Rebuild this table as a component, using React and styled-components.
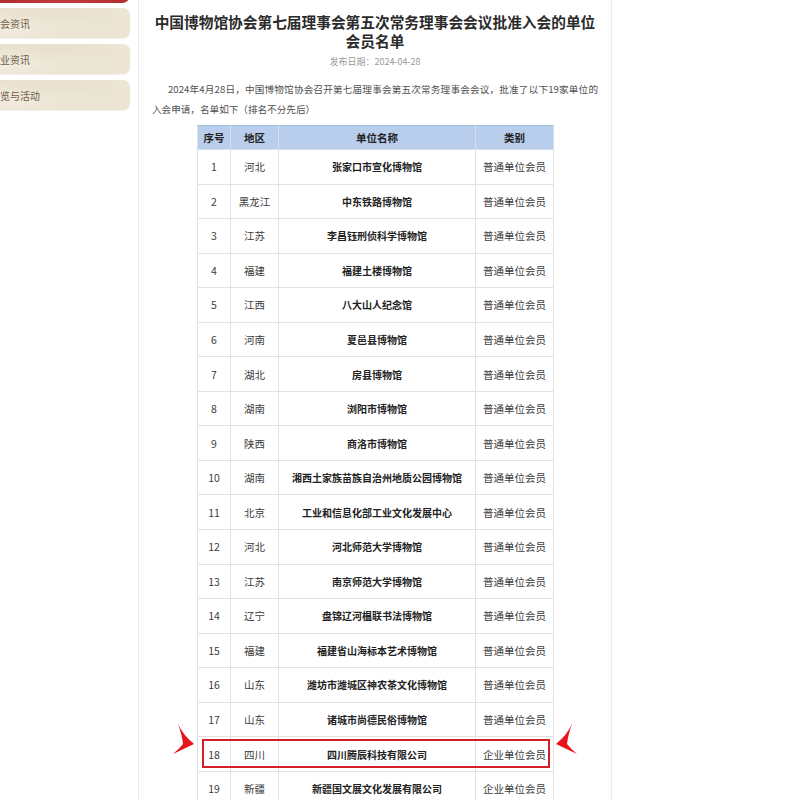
import React from "react";
import styled, { createGlobalStyle } from "styled-components";

const GlobalStyle = createGlobalStyle`
  html, body {
    margin: 0;
    padding: 0;
    background: #fff;
    font-family: "Noto Sans CJK SC", "Noto Sans", sans-serif;
    overflow: hidden;
  }
`;

const Page = styled.div`
  display: flex;
  align-items: stretch;
  width: 800px;
  height: 800px;
  overflow: hidden;
`;

const Sidebar = styled.div`
  width: 170px;
  margin-left: -40px;
  margin-right: 8px;
  display: flex;
  flex-direction: column;
  gap: 6px;
  flex-shrink: 0;
`;

const TopTab = styled.div`
  height: 18px;
  margin-top: -15px;
  background: linear-gradient(90deg, #a9262a, #c23a3a 60%, #b42c30);
  border-radius: 0 0 8px 0;
  margin-bottom: -1px;
`;

const NavItem = styled.div`
  height: 30px;
  display: flex;
  align-items: center;
  padding-left: 30px;
  font-size: 10px;
  color: #6e5b45;
  border-radius: 0 7px 7px 0;
  background:
    radial-gradient(ellipse at 30% 70%, rgba(255, 255, 255, 0.35), transparent 60%),
    linear-gradient(100deg, #ece5d4 0%, #e8e0cc 50%, #ede6d6 100%);
  box-shadow: 0 1px 1px rgba(150, 130, 100, 0.12);
`;

const Main = styled.div`
  flex-shrink: 0;
  border-left: 1px solid #ebebeb;
  border-right: 1px solid #ebebeb;
  padding: 12px 13px 0 13px;
  box-sizing: border-box;
  width: 474px;
`;

const Title = styled.h1`
  margin: 0 -4px;
  font-size: 14.7px;
  line-height: 19px;
  font-weight: bold;
  color: #2b2b2b;
  text-align: center;
`;

const DateLine = styled.div`
  margin-top: 6px;
  font-size: 9px;
  line-height: 12px;
  color: #9a9a9a;
  text-align: center;
`;

const Para = styled.p`
  margin: 11px 0 0 0;
  font-size: 9.6px;
  line-height: 20px;
  color: #505050;
  text-indent: 16px;
  text-align: justify;
`;

const TableWrap = styled.div`
  position: relative;
  width: 356px;
  margin: 6px auto 0;
`;

const Table = styled.table`
  width: 356px;
  border-collapse: collapse;
  table-layout: fixed;
  border: 1px solid #9cc0da;
`;

const Th = styled.th`
  height: 23px;
  background: #b9cdec;
  color: #222;
  font-size: 10.5px;
  font-weight: bold;
  border: 1px solid #d7dfe8;
  border-top: 1px solid #9cc0da;
  padding: 0;
`;

const Row = styled.tr`
  height: 34.55px;
`;

const Td = styled.td`
  border: 1px solid #dfe3e8;
  text-align: center;
  padding: 0;
  font-size: ${(p) => (p.$name ? "10px" : "10.5px")};
  font-weight: ${(p) => (p.$name ? "bold" : "normal")};
  color: ${(p) => (p.$name ? "#222" : "#3c3c3c")};
  white-space: nowrap;
`;

const Highlight = styled.div`
  position: absolute;
  left: 5px;
  right: 3px;
  height: 29px;
  border: 2px solid #d51f26;
  box-sizing: border-box;
  pointer-events: none;
`;

const Arrow = styled.svg`
  position: absolute;
  width: 26px;
  height: 34px;
`;

const rows = [
  ["河北", "张家口市宣化博物馆", "普通单位会员"],
  ["黑龙江", "中东铁路博物馆", "普通单位会员"],
  ["江苏", "李昌钰刑侦科学博物馆", "普通单位会员"],
  ["福建", "福建土楼博物馆", "普通单位会员"],
  ["江西", "八大山人纪念馆", "普通单位会员"],
  ["河南", "夏邑县博物馆", "普通单位会员"],
  ["湖北", "房县博物馆", "普通单位会员"],
  ["湖南", "浏阳市博物馆", "普通单位会员"],
  ["陕西", "商洛市博物馆", "普通单位会员"],
  ["湖南", "湘西土家族苗族自治州地质公园博物馆", "普通单位会员"],
  ["北京", "工业和信息化部工业文化发展中心", "普通单位会员"],
  ["河北", "河北师范大学博物馆", "普通单位会员"],
  ["江苏", "南京师范大学博物馆", "普通单位会员"],
  ["辽宁", "盘锦辽河榅联书法博物馆", "普通单位会员"],
  ["福建", "福建省山海标本艺术博物馆", "普通单位会员"],
  ["山东", "潍坊市潍城区神农茶文化博物馆", "普通单位会员"],
  ["山东", "诸城市尚德民俗博物馆", "普通单位会员"],
  ["四川", "四川腾辰科技有限公司", "企业单位会员"],
  ["新疆", "新疆国文展文化发展有限公司", "企业单位会员"],
];

const HEAD_H = 24;
const ROW_H = 34.55;
const marked = 17;

export default function App() {
  const boxTop = HEAD_H + marked * ROW_H + 3;
  return (
    <>
      <GlobalStyle />
      <Page>
        <Sidebar>
          <TopTab />
          <NavItem>协会资讯</NavItem>
          <NavItem>行业资讯</NavItem>
          <NavItem>展览与活动</NavItem>
        </Sidebar>
        <Main>
          <Title>
            中国博物馆协会第七届理事会第五次常务理事会会议批准入会的单位
            <br />
            会员名单
          </Title>
          <DateLine>发布日期：2024-04-28</DateLine>
          <Para>
            2024年4月28日，中国博物馆协会召开第七届理事会第五次常务理事会会议，批准了以下19家单位的入会申请，名单如下（排名不分先后）
          </Para>
          <TableWrap>
            <Table>
              <colgroup>
                <col style={{ width: 33 }} />
                <col style={{ width: 48 }} />
                <col style={{ width: 197 }} />
                <col style={{ width: 78 }} />
              </colgroup>
              <thead>
                <tr>
                  <Th>序号</Th>
                  <Th>地区</Th>
                  <Th>单位名称</Th>
                  <Th>类别</Th>
                </tr>
              </thead>
              <tbody>
                {rows.map((r, i) => (
                  <Row key={i}>
                    <Td>{i + 1}</Td>
                    <Td>{r[0]}</Td>
                    <Td $name>{r[1]}</Td>
                    <Td>{r[2]}</Td>
                  </Row>
                ))}
              </tbody>
            </Table>
            <Highlight style={{ top: boxTop }} />
            <Arrow viewBox="0 0 26 34" style={{ left: -28, top: boxTop - 16 }}>
              <path d="M9 1 Q14 12 25 21 L4 31 Q10 26 14 21 Q13 12 9 1 Z" fill="#e8151c" />
            </Arrow>
            <Arrow viewBox="0 0 26 34" style={{ left: 358, top: boxTop - 16 }}>
              <path d="M17 1 Q12 12 1 21 L22 31 Q16 26 12 21 Q13 12 17 1 Z" fill="#e8151c" />
            </Arrow>
          </TableWrap>
        </Main>
      </Page>
    </>
  );
}
